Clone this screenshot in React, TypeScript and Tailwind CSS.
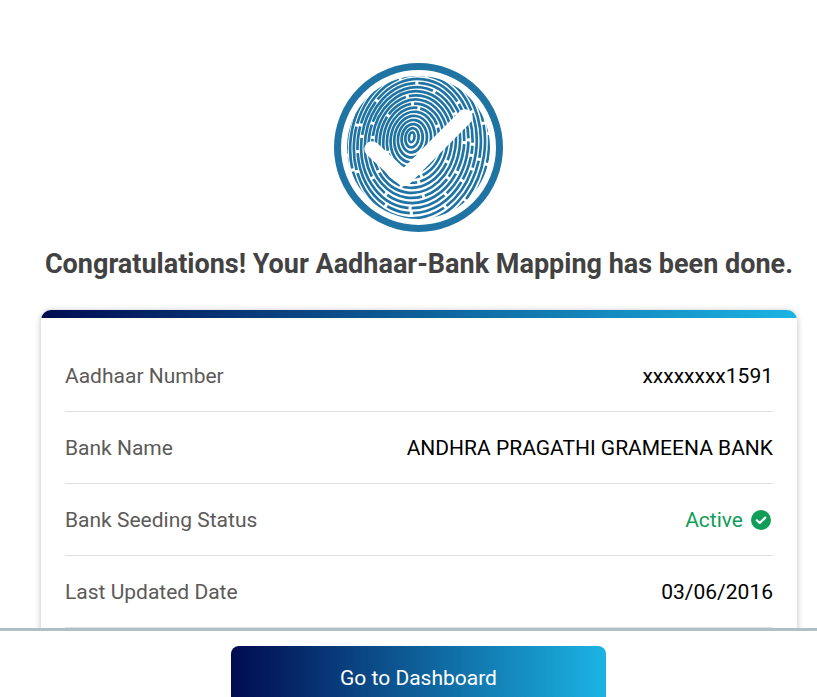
const font = "font-['Roboto',sans-serif]";

const rows = [
  { label: "Aadhaar Number", value: "xxxxxxxx1591" },
  { label: "Bank Name", value: "ANDHRA PRAGATHI GRAMEENA BANK" },
  { label: "Bank Seeding Status", value: "Active", active: true },
  { label: "Last Updated Date", value: "03/06/2016" },
];

// dash patterns for the outer ridges, picked by hand to look like a fingerprint
const dashes = ["90 3", "54 3 110 3", "120 3 32 3", "28 3 76 3", "82 3 18 3 120 3", "36 3 94 3", "60 3 24 3", "110 3 44 3"];

const FingerprintLogo = () => (
  <svg width="169" height="169" viewBox="0 0 169 169" className="block">
    <defs>
      <clipPath id="print">
        <circle cx="84.5" cy="84.5" r="71.5" />
      </clipPath>
    </defs>
    <circle cx="84.5" cy="84.5" r="81" fill="none" stroke="#2074a4" strokeWidth="7" />
    <g clipPath="url(#print)" fill="none" stroke="#2074a4" strokeWidth="2.700">
      {Array.from({ length: 22 }).map((_, i) => {
        const t = i / 21;
        const cx = 77.7 + 5 * t;
        const cy = 74.3 + 10 * t;
        return (
          <ellipse
            key={i}
            cx={cx}
            cy={cy}
            rx={2.7 + i * 3.9}
            ry={5 + i * 4.6}
            strokeDasharray={i < 6 ? undefined : dashes[i % dashes.length]}
            strokeDashoffset={i * 17}
            transform={`rotate(8 ${cx} ${cy})`}
          />
        );
      })}
    </g>
    <path d="M38 86 L70 115.500 L131 54" fill="none" stroke="#fff" strokeWidth="15.500" strokeLinecap="round" strokeLinejoin="round" />
  </svg>
);

const ActiveIcon = () => (
  <svg width="20" height="20" viewBox="0 0 20 20" className="block">
    <circle cx="10" cy="10" r="10" fill="#0f9d58" />
    <path d="M5.800 10.300 L8.700 13 L14.200 7.600" fill="none" stroke="#fff" strokeWidth="2.200" strokeLinecap="round" strokeLinejoin="round" />
  </svg>
);

export default function App() {
  return (
    <div className={`h-[697px] w-[817px] flex flex-col overflow-hidden bg-white ${font}`}>
      <div className="h-[628px] shrink-0 overflow-hidden pl-[41px] pr-[20px] pt-[63px]">
        <div className="flex justify-center pr-[1px]">
          <FingerprintLogo />
        </div>
        <h1 className="mt-[13px] text-center text-[27px] leading-[38px] font-bold text-[#424242] whitespace-nowrap">
          Congratulations! Your Aadhaar-Bank Mapping has been done.
        </h1>
        <div className="mt-[27px] rounded-t-[10px] bg-white shadow-[0_1px_6px_rgba(40,40,60,0.3)] overflow-hidden">
          <div className="h-2 bg-[linear-gradient(to_right,#010b50,#1bb4e3)]" />
          <div className="px-6 pt-[22px] pb-4">
            {rows.map((row) => (
              <div key={row.label} className="h-[72px] flex items-center justify-between border-b border-[#e0e0e0] text-[21px]">
                <span className="pt-[2px] text-[#5c5a58]">{row.label}</span>
                {row.active ? (
                  <span className="flex items-center gap-[8px] pr-[2px] text-[#0f9d58]">
                    <span className="pt-[2px]">{row.value}</span>
                    <ActiveIcon />
                  </span>
                ) : (
                  <span className="pt-[2px] text-black">{row.value}</span>
                )}
              </div>
            ))}
          </div>
        </div>
      </div>
      <div className="flex-1 overflow-hidden border-t-[3px] border-[#b0bec5] pt-[15px] pl-[231px]">
        <button className="w-[375px] h-16 shrink-0 pt-[2px] rounded-t-[8px] bg-[linear-gradient(to_right,#010b50,#1bb4e3)] text-white text-[21px]">
          Go to Dashboard
        </button>
      </div>
    </div>
  );
}
